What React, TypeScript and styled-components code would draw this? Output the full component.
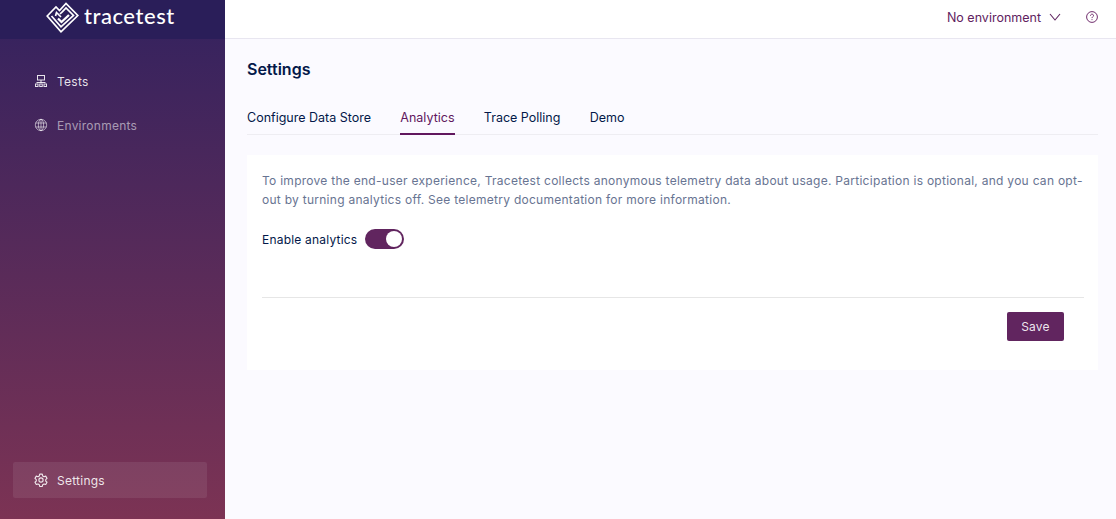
import { ReactNode } from "react";
import styled, { createGlobalStyle } from "styled-components";

const GlobalStyle = createGlobalStyle`
  html, body { margin: 0; padding: 0; height: 100%; }
  body { font-family: Inter, "Liberation Sans", sans-serif; background: #fbfaff; }
  * { box-sizing: border-box; }
`;

const LogoMark = () => (
  <svg width="33" height="31" viewBox="0 0 33 31" fill="none" stroke="#fff" strokeWidth="1.7" strokeLinejoin="miter">
    <path d="M1.2 14 L10 5 L13.5 8.5 L20 1.5 L31.8 13.5 L15 29.8 Z" />
    <path d="M5.5 14 L15 24.8 L27.5 13.5 L20 6 L16.5 9.6 L14 12" />
    <path d="M9.5 14 L10.5 10.5 L15 15" />
    <path d="M12 16.5 L15.5 20 L23 13" strokeWidth="2.3" />
  </svg>
);

const NetworkIcon = () => (
  <svg width="14" height="14" viewBox="0 0 14 14" fill="none" stroke="currentColor" strokeWidth="1">
    <rect x="3.5" y="1.5" width="7" height="4.5" />
    <path d="M7 6v3M2.5 8.5h9" />
    <rect x="1.5" y="10" width="2.5" height="2.5" />
    <rect x="5.75" y="10" width="2.5" height="2.5" />
    <rect x="10" y="10" width="2.5" height="2.5" />
  </svg>
);

const GlobeIcon = () => (
  <svg width="14" height="14" viewBox="0 0 14 14" fill="none" stroke="currentColor" strokeWidth="1">
    <circle cx="7" cy="7" r="5.7" />
    <ellipse cx="7" cy="7" rx="2.6" ry="5.7" />
    <path d="M1.6 5h10.8M1.6 9h10.8M7 1.3v11.4" />
  </svg>
);

const GearIcon = () => (
  <svg width="14" height="14" viewBox="0 0 24 24" fill="none" stroke="currentColor" strokeWidth="1.9" strokeLinejoin="round">
    <path d="M9.8 2h4.4l.7 3 2.2 1.3 3-.9 2.2 3.8-2.2 2.1v2.5l2.2 2.1-2.2 3.8-3-.9-2.2 1.3-.7 3H9.8l-.7-3-2.2-1.3-3 .9-2.2-3.8 2.2-2.1v-2.5L1.7 9.2l2.2-3.8 3 .9 2.2-1.3z" />
    <circle cx="12" cy="12" r="3.6" />
  </svg>
);

const ChevronIcon = () => (
  <svg width="12" height="8" viewBox="0 0 12 8" fill="none" stroke="currentColor" strokeWidth="1.1">
    <path d="M1 1l5 6 5-6" />
  </svg>
);

const HelpIcon = () => (
  <svg width="12" height="12" viewBox="0 0 12 12" fill="none" stroke="currentColor" strokeWidth="0.9">
    <circle cx="6" cy="6" r="5.4" />
    <path d="M4.5 4.7c0-2 3-2 3-.1 0 1.2-1.5 1.2-1.5 2.5" />
    <path d="M6 8.2v.9" />
  </svg>
);

const Layout = styled.div`
  display: flex;
  height: 519px;
  width: 1116px;
  overflow: hidden;
`;

const Sidebar = styled.aside`
  display: flex;
  flex-direction: column;
  width: 225px;
  flex-shrink: 0;
  background: linear-gradient(180deg, #33225f 0%, #7c3354 100%);
`;

const LogoBar = styled.div`
  display: flex;
  align-items: flex-start;
  gap: 5px;
  height: 39px;
  padding: 2px 0 0 46px;
  overflow: hidden;
  background: #2a1e59;
`;

const LogoWord = styled.span`
  font-family: Lato, "Noto Sans", sans-serif;
  font-size: 22px;
  font-weight: 500;
  letter-spacing: 0.55px;
  color: #fff;
  line-height: 28px;
`;

const LogoMarkBox = styled.span`
  display: flex;
`;

const Nav = styled.nav`
  display: flex;
  flex-direction: column;
  flex: 1;
  padding: 24px 18px 21px 13px;
`;

const NavItem = styled.div<{ $dim?: boolean; $active?: boolean; $bottom?: boolean }>`
  display: flex;
  align-items: center;
  gap: 9px;
  height: 36px;
  padding-left: 21px;
  margin-top: ${(p) => (p.$bottom ? "auto" : "0")};
  margin-bottom: ${(p) => (p.$bottom ? "0" : "8px")};
  border-radius: 2px;
  font-size: 12px;
  letter-spacing: 0.25px;
  color: ${(p) => (p.$dim ? "rgba(255,255,255,0.55)" : "rgba(255,255,255,0.88)")};
  background: ${(p) => (p.$active ? "rgba(255,255,255,0.08)" : "transparent")};
`;

const Main = styled.main`
  display: flex;
  flex-direction: column;
  flex: 1;
  min-width: 0;
`;

const TopBar = styled.header`
  display: flex;
  align-items: center;
  justify-content: flex-end;
  height: 39px;
  padding: 0 18px 4px 0;
  background: #fff;
  border-bottom: 1px solid #e8e6f0;
  color: #61175e;
  font-size: 12.5px;
`;

const EnvSelect = styled.div`
  display: flex;
  align-items: center;
  gap: 8px;
  margin-right: 25px;
  color: #5f2360;
`;

const IconBox = styled.span`
  display: flex;
`;

const Content = styled.div`
  display: flex;
  flex-direction: column;
  padding: 20px 18px 0 22px;
`;

const Title = styled.h1`
  margin: 0;
  font-size: 16px;
  line-height: 20px;
  font-weight: 600;
  color: #031849;
`;

const Tabs = styled.div`
  display: flex;
  gap: 29.3px;
  margin-top: 20px;
  height: 36px;
  border-bottom: 1px solid #eeedf2;
`;

const Tab = styled.div<{ $active?: boolean }>`
  height: 36px;
  padding-top: 11px;
  font-size: 12.5px;
  line-height: 16px;
  color: ${(p) => (p.$active ? "#61175e" : "#031849")};
  border-bottom: ${(p) => (p.$active ? "2px solid #61175e" : "none")};
`;

const Card = styled.section`
  display: flex;
  flex-direction: column;
  height: 215px;
  margin-top: 20px;
  padding: 16px 14px 0 15px;
  background: #fff;
`;

const Description = styled.p`
  margin: 0;
  font-size: 12px;
  line-height: 19px;
  letter-spacing: 0.27px;
  color: #687492;
`;

const ToggleRow = styled.label`
  display: flex;
  align-items: center;
  gap: 8px;
  margin-top: 20px;
  height: 20px;
  font-size: 12px;
  letter-spacing: 0.2px;
  color: #031849;
`;

const Toggle = styled.span`
  display: flex;
  justify-content: flex-end;
  align-items: center;
  width: 39px;
  height: 20px;
  padding: 2px;
  border-radius: 10px;
  background: #61255f;
`;

const Knob = styled.span`
  width: 16px;
  height: 16px;
  border-radius: 50%;
  background: #fff;
`;

const Footer = styled.div`
  display: flex;
  justify-content: flex-end;
  margin-top: 48px;
  padding: 14px 20px 0 0;
  border-top: 1px solid #e6e6e6;
`;

const SaveButton = styled.button`
  width: 57px;
  height: 29px;
  border: none;
  border-radius: 2px;
  background: #61255f;
  color: rgba(255, 255, 255, 0.9);
  font-family: inherit;
  font-size: 12px;
  letter-spacing: 0.2px;
`;

const navItems: { label: string; icon: ReactNode; dim?: boolean }[] = [
  { label: "Tests", icon: <NetworkIcon /> },
  { label: "Environments", icon: <GlobeIcon />, dim: true },
];

const tabs = ["Configure Data Store", "Analytics", "Trace Polling", "Demo"];

export default function App() {
  return (
    <Layout>
      <GlobalStyle />
      <Sidebar>
        <LogoBar>
          <LogoMarkBox>
            <LogoMark />
          </LogoMarkBox>
          <LogoWord>tracetest</LogoWord>
        </LogoBar>
        <Nav>
          {navItems.map((item) => (
            <NavItem key={item.label} $dim={item.dim}>
              {item.icon}
              {item.label}
            </NavItem>
          ))}
          <NavItem $active $bottom>
            <GearIcon />
            Settings
          </NavItem>
        </Nav>
      </Sidebar>
      <Main>
        <TopBar>
          <EnvSelect>
            No environment
            <ChevronIcon />
          </EnvSelect>
          <IconBox>
            <HelpIcon />
          </IconBox>
        </TopBar>
        <Content>
          <Title>Settings</Title>
          <Tabs>
            {tabs.map((tab) => (
              <Tab key={tab} $active={tab === "Analytics"}>
                {tab}
              </Tab>
            ))}
          </Tabs>
          <Card>
            <Description>
              To improve the end-user experience, Tracetest collects anonymous telemetry data about usage. Participation is
              optional, and you can opt-out by turning analytics off. See telemetry documentation for more information.
            </Description>
            <ToggleRow>
              Enable analytics
              <Toggle>
                <Knob />
              </Toggle>
            </ToggleRow>
            <Footer>
              <SaveButton>Save</SaveButton>
            </Footer>
          </Card>
        </Content>
      </Main>
    </Layout>
  );
}
